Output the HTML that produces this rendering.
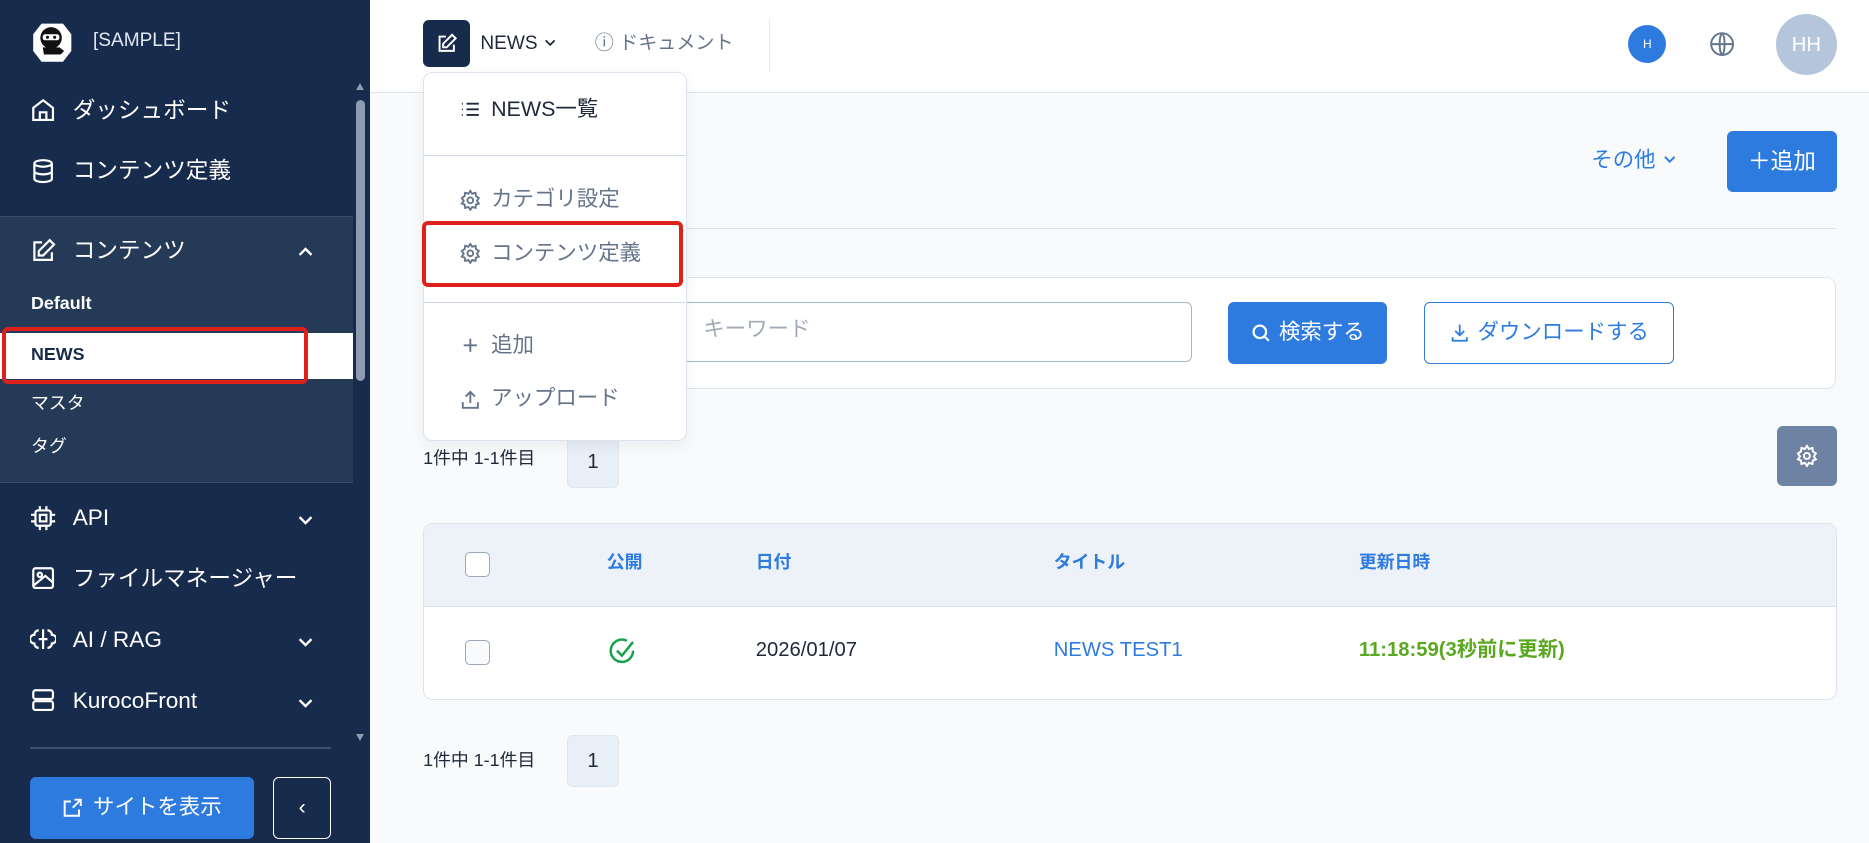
<!DOCTYPE html>
<html><head><meta charset="utf-8">
<style>
*{box-sizing:border-box;margin:0;padding:0}
html,body{width:1869px;height:843px;overflow:hidden;background:#f8fafc}
#w{zoom:1.19196;width:1568px;height:707px;position:relative;font-family:"Liberation Sans","Noto Sans CJK JP",sans-serif;color:#1e293b;line-height:1.2}
.a{position:absolute}
.sb{left:0;top:0;width:310px;height:707px;background:#172b4d;color:#fff}
.mi{position:absolute;left:25px;font-size:19px;display:flex;align-items:center;gap:14px;color:#fff}
.mi svg{width:22px;height:22px}
.chev{position:absolute;left:248px;width:16px;height:16px}
.sub{position:absolute;left:26px;font-size:15px;color:#fff}
.hd{left:310px;top:0;width:1258px;height:78px;background:#fff;border-bottom:1px solid #dbe3ee}
.btn{position:absolute;border-radius:5px;display:flex;align-items:center;justify-content:center;font-size:18px}
.pg{position:absolute;left:476px;width:43px;height:43px;background:#e9eff7;border:1px solid #dfe6f0;border-radius:5px;display:flex;align-items:center;justify-content:center;font-size:17px}
.pt{position:absolute;left:355px;font-size:15px;color:#1e293b}
.th{position:absolute;top:463px;font-size:15px;font-weight:bold;color:#2e7be0}
.dd{position:absolute;left:385px;font-size:18px;display:flex;align-items:center;gap:8px;color:#64748b}
.dd svg{width:19px;height:19px}
</style></head><body><div id="w">
<div class="a sb">
 <svg class="a" style="left:27px;top:17px" width="34" height="36" viewBox="0 0 34 36"><path d="M8 3h18l7 9v14l-7 9H8l-7-9V12z" fill="#fff"/><circle cx="16" cy="15" r="9" fill="#111"/><rect x="9" y="12" width="14" height="5" rx="2" fill="#fff"/><circle cx="13" cy="14.5" r="1.3" fill="#111"/><circle cx="19" cy="14.5" r="1.3" fill="#111"/><path d="M9 23h14l4 3-3 3H10z" fill="#111"/></svg>
 <div class="a" style="left:78px;top:25px;font-size:16px;color:#e2e8f0">[SAMPLE]</div>
 <div class="mi" style="top:81px"><svg viewBox="0 0 24 24" fill="none" stroke="#fff" stroke-width="2"><path d="M3 10l9-7 9 7v11H3zM9 21v-7h6v7"/></svg>ダッシュボード</div>
 <div class="mi" style="top:132px"><svg viewBox="0 0 24 24" fill="none" stroke="#fff" stroke-width="2"><ellipse cx="12" cy="5" rx="8" ry="3"/><path d="M4 5v14c0 1.7 3.6 3 8 3s8-1.3 8-3V5M4 12c0 1.7 3.6 3 8 3s8-1.3 8-3"/></svg>コンテンツ定義</div>
 <div class="a" style="left:0;top:181px;width:296px;height:224px;background:#253a57;border-top:1px solid #3b4f6c;border-bottom:1px solid #3b4f6c"></div>
 <div class="mi" style="top:199px"><svg viewBox="0 0 24 24" fill="none" stroke="#fff" stroke-width="2"><path d="M11 4H4v16h16v-7M18 2l4 4-10 10H8v-4z"/></svg>コンテンツ</div>
 <svg class="chev" style="top:204px" viewBox="0 0 16 16" fill="none" stroke="#fff" stroke-width="2"><path d="M3 10l5-5 5 5"/></svg>
 <div class="sub" style="top:246px;font-weight:bold">Default</div>
 <div class="a" style="left:0;top:279px;width:296px;height:39px;background:#fff"></div>
 <div class="sub" style="top:289px;color:#172b4d;font-weight:bold">NEWS</div>
 <div class="a" style="left:2px;top:274px;width:256px;height:48px;border:4px solid #e0201a;border-radius:5px"></div>
 <div class="sub" style="top:330px">マスタ</div>
 <div class="sub" style="top:366px">タグ</div>
 <div class="mi" style="top:423px"><svg viewBox="0 0 24 24" fill="none" stroke="#fff" stroke-width="2"><rect x="5" y="5" width="14" height="14" rx="2"/><rect x="9" y="9" width="6" height="6"/><path d="M9 1v4M15 1v4M9 19v4M15 19v4M1 9h4M1 15h4M19 9h4M19 15h4"/></svg>API</div>
 <svg class="chev" style="top:428px" viewBox="0 0 16 16" fill="none" stroke="#fff" stroke-width="2"><path d="M3 6l5 5 5-5"/></svg>
 <div class="mi" style="top:474px"><svg viewBox="0 0 24 24" fill="none" stroke="#fff" stroke-width="2"><rect x="3" y="3" width="18" height="18" rx="2"/><circle cx="9" cy="9" r="2"/><path d="M3 19l11-9 7 6"/></svg>ファイルマネージャー</div>
 <div class="mi" style="top:525px"><svg viewBox="0 0 24 24" fill="none" stroke="#fff" stroke-width="2"><path d="M12 3v18M8 4a4 4 0 00-4 4 4 4 0 000 8 4 4 0 004 4M16 4a4 4 0 014 4 4 4 0 010 8 4 4 0 01-4 4M8 12h8"/></svg>AI / RAG</div>
 <svg class="chev" style="top:530px" viewBox="0 0 16 16" fill="none" stroke="#fff" stroke-width="2"><path d="M3 6l5 5 5-5"/></svg>
 <div class="mi" style="top:576px"><svg viewBox="0 0 24 24" fill="none" stroke="#fff" stroke-width="2"><rect x="3" y="3" width="18" height="8" rx="2"/><rect x="3" y="13" width="18" height="8" rx="2"/><path d="M7 7h.01M7 17h.01"/></svg>KurocoFront</div>
 <svg class="chev" style="top:581px" viewBox="0 0 16 16" fill="none" stroke="#fff" stroke-width="2"><path d="M3 6l5 5 5-5"/></svg>
 <div class="a" style="left:299px;top:84px;width:7px;height:236px;background:#8d9bb0;border-radius:4px"></div>
 <div class="a" style="left:299px;top:70px;width:0;height:0;border:4px solid transparent;border-bottom:6px solid #8d9bb0;border-top:0"></div>
 <div class="a" style="left:299px;top:616px;width:0;height:0;border:4px solid transparent;border-top:6px solid #8d9bb0;border-bottom:0"></div>
 <div class="a" style="left:25px;top:627px;width:253px;height:1px;background:#3f5370"></div>
 <div class="btn" style="left:25px;top:652px;width:188px;height:52px;background:#2e7be0;color:#fff;gap:8px"><svg width="18" height="18" viewBox="0 0 24 24" fill="none" stroke="#fff" stroke-width="2.2"><path d="M14 3h7v7M21 3l-9 9M19 14v7H3V5h7"/></svg>サイトを表示</div>
 <div class="btn" style="left:229px;top:652px;width:49px;height:52px;border:1.5px solid #fff;color:#fff">‹</div>
</div>
<div class="a hd"></div>
<div class="btn" style="left:355px;top:17px;width:39px;height:39px;background:#172b4d"><svg width="18" height="18" viewBox="0 0 24 24" fill="none" stroke="#fff" stroke-width="2.2"><path d="M11 4H4v16h16v-7M18 2l4 4-10 10H8v-4z"/></svg></div>
<div class="a" style="left:403px;top:28px;font-size:16px">NEWS <svg width="12" height="12" viewBox="0 0 16 16" fill="none" stroke="#1e293b" stroke-width="2"><path d="M3 6l5 5 5-5"/></svg></div>
<div class="a" style="left:499px;top:28px;font-size:16px;color:#64748b">ⓘ ドキュメント</div>
<div class="a" style="left:645px;top:16px;width:1px;height:44px;background:#e2e8f0"></div>
<div class="btn" style="left:1366px;top:21px;width:32px;height:32px;border-radius:50%;background:#2e7be0;color:#fff;font-size:10px">H</div>
<svg class="a" style="left:1434px;top:26px" width="22" height="22" viewBox="0 0 24 24" fill="none" stroke="#64748b" stroke-width="1.8"><circle cx="12" cy="12" r="10"/><path d="M2 12h20M12 2c3 3 3 17 0 20M12 2c-3 3-3 17 0 20"/></svg>
<div class="btn" style="left:1490px;top:12px;width:51px;height:51px;border-radius:50%;background:#b5c5dc;color:#fff;font-size:17px">HH</div>
<div class="a" style="left:1335px;top:124px;font-size:18px;color:#2e7be0">その他 <svg width="13" height="13" viewBox="0 0 16 16" fill="none" stroke="#2e7be0" stroke-width="2"><path d="M3 6l5 5 5-5"/></svg></div>
<div class="btn" style="left:1449px;top:110px;width:92px;height:51px;background:#2e7be0;color:#fff;font-size:19px">＋追加</div>
<div class="a" style="left:355px;top:191px;width:1185px;height:1px;background:#dbe3ee"></div>
<div class="a" style="left:355px;top:232px;width:1185px;height:94px;background:#fff;border:1px solid #dbe3ee;border-radius:8px"></div>
<div class="a" style="left:540px;top:253px;width:460px;height:51px;border:1px solid #a8b5c8;border-radius:5px;background:#fff"></div>
<div class="a" style="left:590px;top:266px;font-size:18px;color:#a0aab8">キーワード</div>
<div class="btn" style="left:1030px;top:253px;width:134px;height:52px;background:#2e7be0;color:#fff;gap:6px"><svg width="18" height="18" viewBox="0 0 24 24" fill="none" stroke="#fff" stroke-width="2.4"><circle cx="11" cy="11" r="7"/><path d="M16 16l5 5"/></svg>検索する</div>
<div class="btn" style="left:1195px;top:253px;width:209px;height:52px;border:1px solid #2e7be0;background:#fff;color:#2e7be0;gap:6px"><svg width="18" height="18" viewBox="0 0 24 24" fill="none" stroke="#2e7be0" stroke-width="2"><path d="M12 3v12M7 10l5 5 5-5M4 17v4h16v-4"/></svg>ダウンロードする</div>
<div class="pt" style="top:376px">1件中 1-1件目</div>
<div class="pg" style="top:366px">1</div>
<div class="btn" style="left:1491px;top:357px;width:50px;height:51px;background:#6e83a4"><svg width="20" height="20" viewBox="0 0 24 24" fill="none" stroke="#fff" stroke-width="2"><circle cx="12" cy="12" r="3"/><path d="M12 2l2 3 3.5-1 .5 3.5 3 2-2 3 2 3-3 1-.5 3.5-3.5-1-2 3-2-3-3.5 1-.5-3.5-3-1 2-3-2-3 3-2 .5-3.5 3.5 1z"/></svg></div>
<div class="a" style="left:355px;top:439px;width:1186px;height:148px;background:#fff;border:1px solid #dbe3ee;border-radius:8px;overflow:hidden"><div style="height:69px;background:#edf2f9;border-bottom:1px solid #dbe3ee"></div></div>
<div class="a" style="left:390px;top:463px;width:21px;height:21px;border:1px solid #9aa8bd;border-radius:4px;background:#fff"></div>
<div class="a" style="left:390px;top:537px;width:21px;height:21px;border:1px solid #9aa8bd;border-radius:4px;background:#f8fafc"></div>
<div class="th" style="left:509px">公開</div>
<div class="th" style="left:634px">日付</div>
<div class="th" style="left:884px">タイトル</div>
<div class="th" style="left:1140px">更新日時</div>
<svg class="a" style="left:509px;top:534px" width="25" height="25" viewBox="0 0 24 24" fill="none" stroke="#16a34a" stroke-width="2"><path d="M21 11a9 9 0 11-5-8"/><path d="M8 11l4 4 9-11"/></svg>
<div class="a" style="left:634px;top:536px;font-size:17px;line-height:20px">2026/01/07</div>
<div class="a" style="left:884px;top:536px;font-size:17px;line-height:20px;color:#2e7be0">NEWS TEST1</div>
<div class="a" style="left:1140px;top:536px;font-size:17px;line-height:20px;color:#5aa820;font-weight:bold">11:18:59(3秒前に更新)</div>
<div class="pt" style="top:629px">1件中 1-1件目</div>
<div class="pg" style="top:617px">1</div>
<div class="a" style="left:355px;top:60px;width:221px;height:310px;background:#fff;border:1px solid #dbe3ee;border-radius:8px;box-shadow:0 4px 12px rgba(0,0,0,.06)"></div>
<div class="dd" style="top:81px;color:#1e293b"><svg viewBox="0 0 24 24" fill="none" stroke="#1e293b" stroke-width="2"><path d="M8 6h13M8 12h13M8 18h13M3 6h1M3 12h1M3 18h1"/></svg>NEWS一覧</div>
<div class="a" style="left:356px;top:130px;width:219px;height:1px;background:#cdd7e4"></div>
<div class="dd" style="top:157px"><svg viewBox="0 0 24 24" fill="none" stroke="#64748b" stroke-width="2"><circle cx="12" cy="12" r="3"/><path d="M12 2l2 3 3.5-1 .5 3.5 3 2-2 3 2 3-3 1-.5 3.5-3.5-1-2 3-2-3-3.5 1-.5-3.5-3-1 2-3-2-3 3-2 .5-3.5 3.5 1z"/></svg>カテゴリ設定</div>
<div class="dd" style="top:202px"><svg viewBox="0 0 24 24" fill="none" stroke="#64748b" stroke-width="2"><circle cx="12" cy="12" r="3"/><path d="M12 2l2 3 3.5-1 .5 3.5 3 2-2 3 2 3-3 1-.5 3.5-3.5-1-2 3-2-3-3.5 1-.5-3.5-3-1 2-3-2-3 3-2 .5-3.5 3.5 1z"/></svg>コンテンツ定義</div>
<div class="a" style="left:354px;top:185px;width:219px;height:56px;border:4px solid #e0201a;border-radius:5px"></div>
<div class="a" style="left:356px;top:253px;width:219px;height:1px;background:#cdd7e4"></div>
<div class="dd" style="top:279px"><svg viewBox="0 0 24 24" fill="none" stroke="#64748b" stroke-width="2"><path d="M12 5v14M5 12h14"/></svg>追加</div>
<div class="dd" style="top:324px"><svg viewBox="0 0 24 24" fill="none" stroke="#64748b" stroke-width="2"><path d="M12 16V4M7 9l5-5 5 5M4 15v6h16v-6"/></svg>アップロード</div>
</div></body></html>
